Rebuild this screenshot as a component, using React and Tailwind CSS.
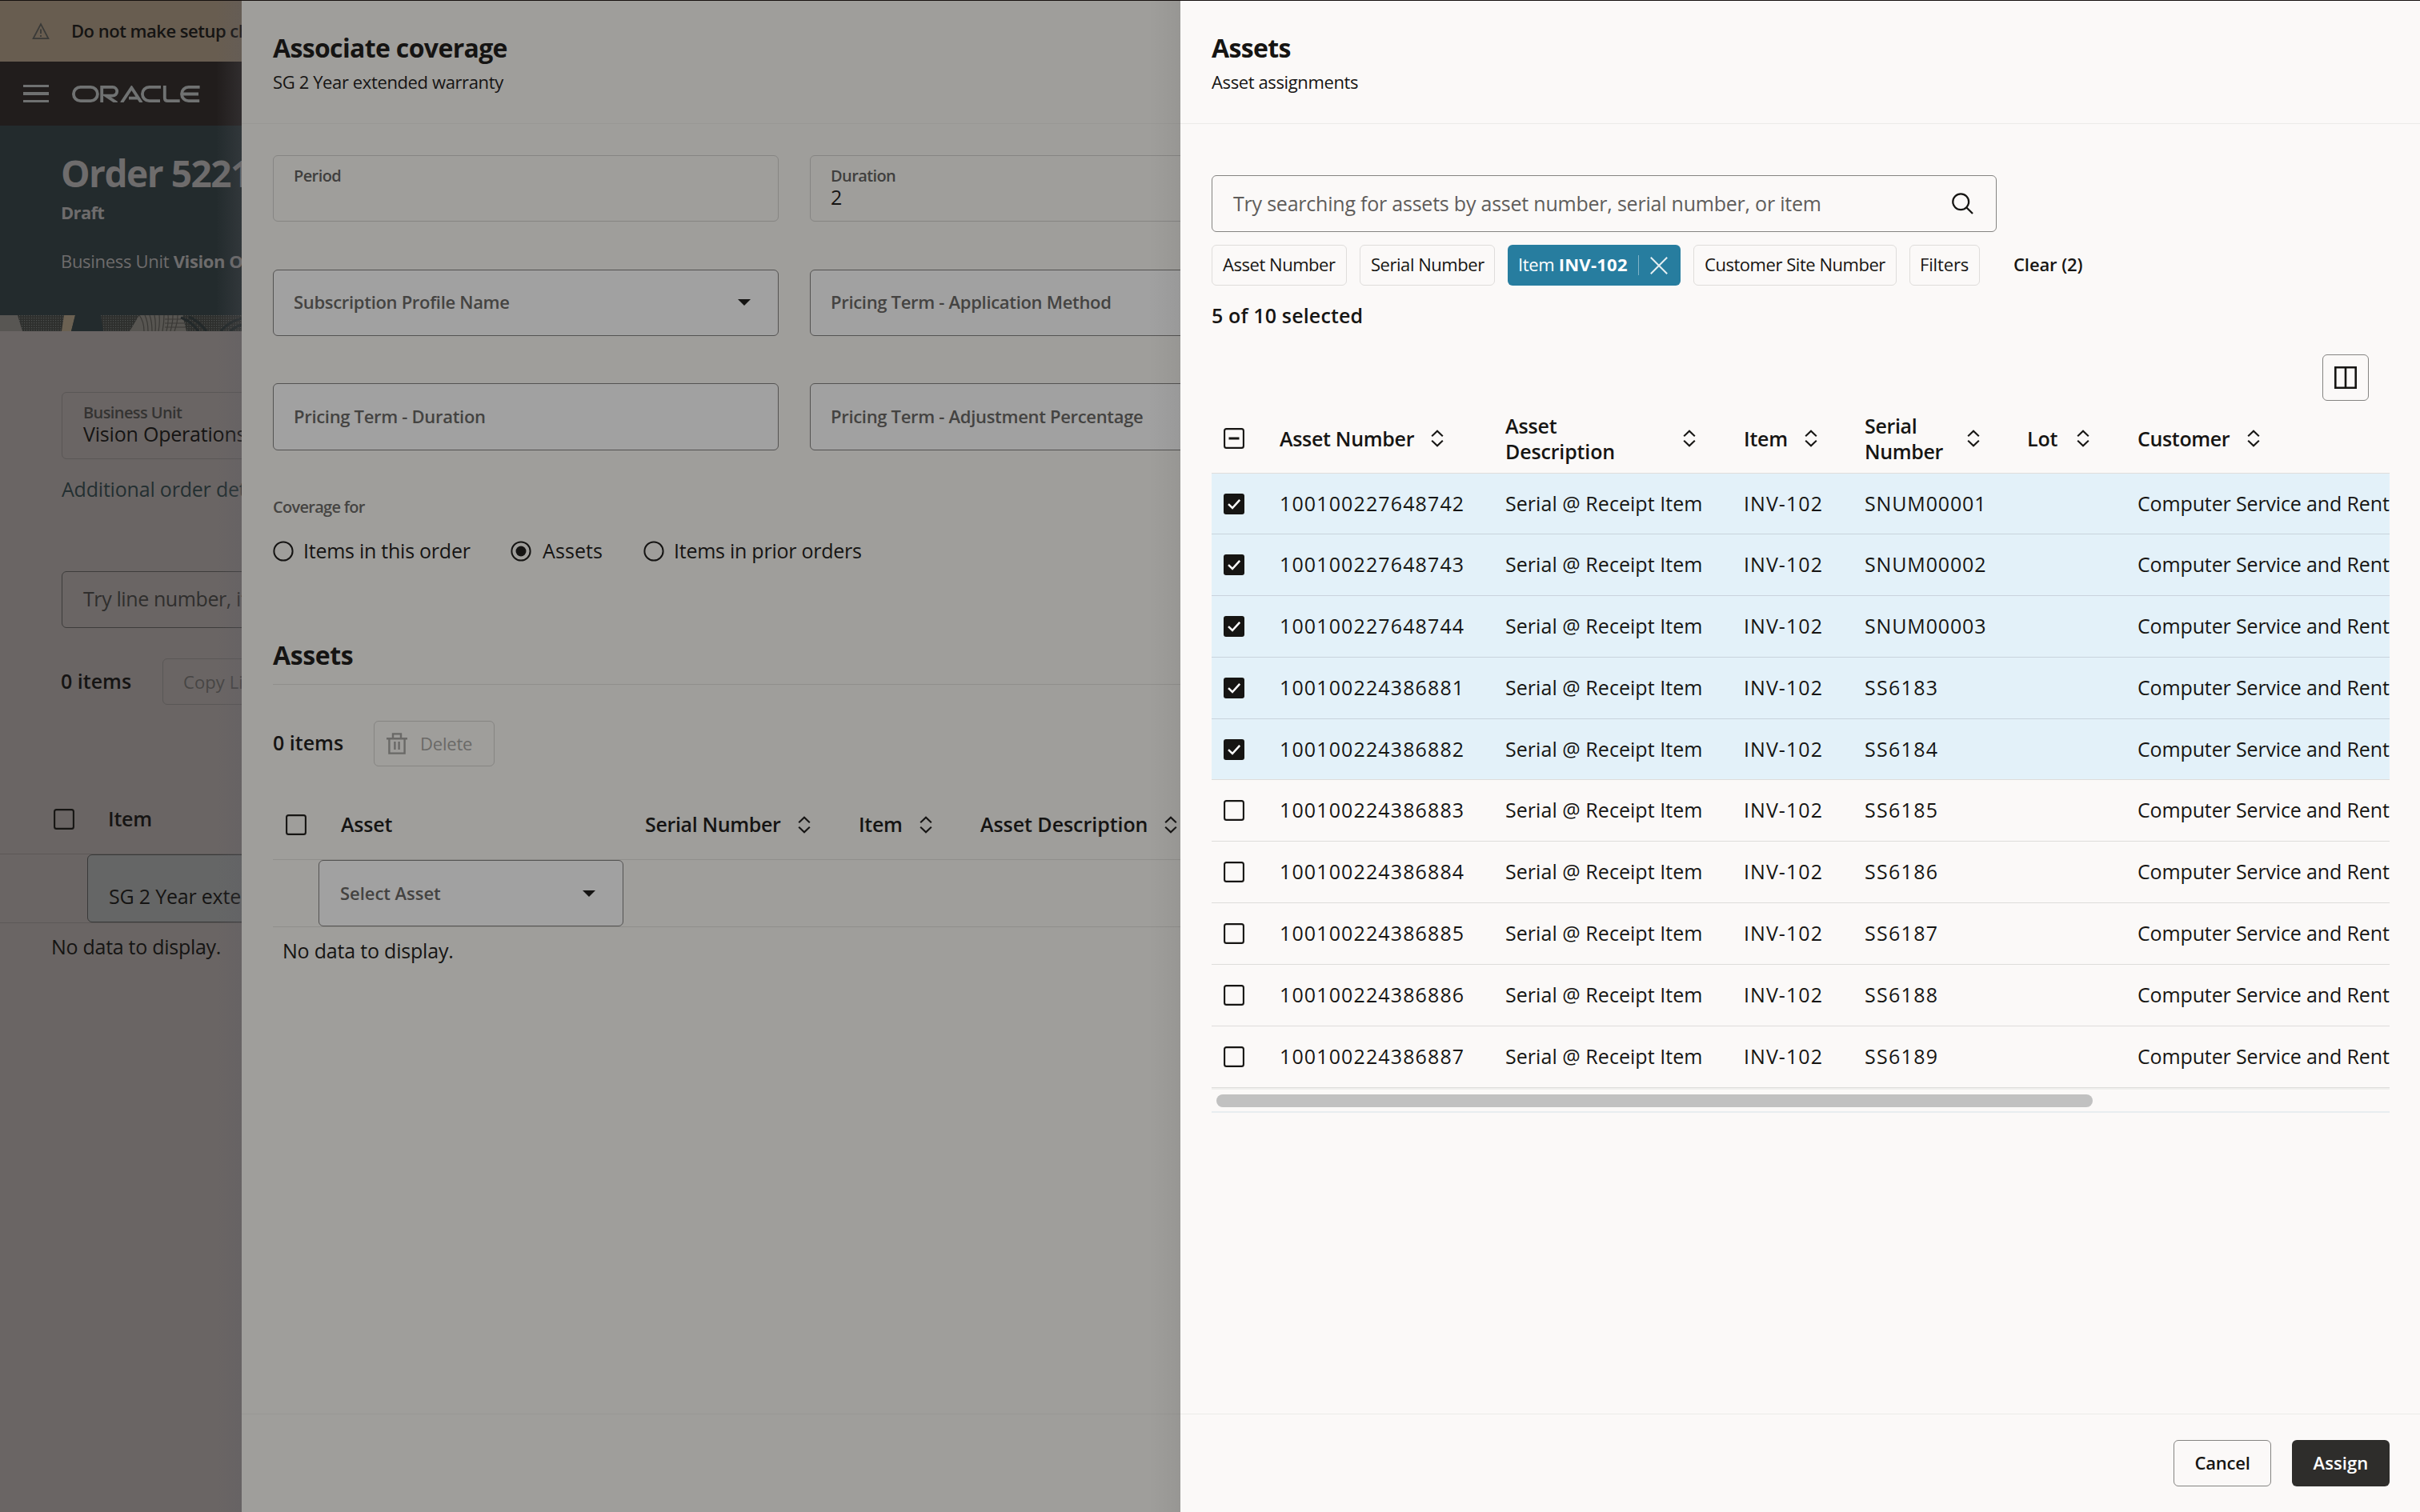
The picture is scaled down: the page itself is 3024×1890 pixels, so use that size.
import React from 'react';

const ASSETS = [
  { number: '100100227648742', serial: 'SNUM00001', checked: true, h: 'h-[76px]' },
  { number: '100100227648743', serial: 'SNUM00002', checked: true, h: 'h-[77px]' },
  { number: '100100227648744', serial: 'SNUM00003', checked: true, h: 'h-[77px]' },
  { number: '100100224386881', serial: 'SS6183', checked: true, h: 'h-[77px]' },
  { number: '100100224386882', serial: 'SS6184', checked: true, last: true, h: 'h-[76px]' },
  { number: '100100224386883', serial: 'SS6185', h: 'h-[77px]' },
  { number: '100100224386884', serial: 'SS6186', h: 'h-[77px]' },
  { number: '100100224386885', serial: 'SS6187', h: 'h-[77px]' },
  { number: '100100224386886', serial: 'SS6188', h: 'h-[77px]' },
  { number: '100100224386887', serial: 'SS6189', h: 'h-[77px]' },
];

const COLS = 'grid grid-cols-[85px_282px_298px_151px_203px_138px_600px]';

function SortIcon({ className = '' }) {
  return (
    <svg viewBox="0 0 16 22" className={`h-[22px] w-4 shrink-0 ${className}`} fill="none" stroke="currentColor" strokeWidth="2.1">
      <path d="M1.2 8.2 8 1.8l6.8 6.4M1.2 13.8 8 20.2l6.8-6.4" />
    </svg>
  );
}

function Checkbox({ state = 'off' }) {
  if (state === 'on') {
    return (
      <svg viewBox="0 0 26 26" className="size-[26px] shrink-0">
        <rect x="0" y="0" width="26" height="26" rx="3" fill="#161513" />
        <path d="m6 13.2 5 4.8 9.2-10.2" fill="none" stroke="#fff" strokeWidth="2.5" />
      </svg>
    );
  }
  return (
    <svg viewBox="0 0 26 26" className="size-[26px] shrink-0" fill="none" stroke="#161513">
      <rect x="1.1" y="1.1" width="23.8" height="23.8" rx="2.5" strokeWidth="2.1" />
      {state === 'mixed' && <path d="M6.5 13h13" strokeWidth="3" />}
    </svg>
  );
}

function Radio({ checked }) {
  return (
    <svg viewBox="0 0 26 26" className="size-[26px] shrink-0" fill="none" stroke="#151413">
      <circle cx="13" cy="13" r="11.6" strokeWidth="2" />
      {checked && <circle cx="13" cy="13" r="6.5" fill="#151413" stroke="none" />}
    </svg>
  );
}

function Caret({ className = '' }) {
  return (
    <svg viewBox="0 0 16 8" className={`h-2 w-4 shrink-0 ${className}`} fill="#151413">
      <path d="M0 0h16L8 8z" />
    </svg>
  );
}

function OracleLogo() {
  return (
    <svg viewBox="90 107 160 21" className="h-[21px] w-40" fill="none" stroke="#707272" strokeWidth="3.8">
      <rect x="91.9" y="108.9" width="30" height="17.2" rx="8.6" />
      <path d="M127.2 128v-19.1h13.6a5.4 5.4 0 0 1 0 10.8h-8.3l13.6 9" />
      <path d="m151.8 128.6 12.6-19 12.4 19M161 122.6h12" />
      <path d="M201 108.9h-14.5a8.6 8.6 0 0 0 0 17.2H200" />
      <path d="M205.8 107v15.4q0 3.7 3.7 3.7h15.2" />
      <path d="M249.6 108.9h-14a8.6 8.6 0 0 0 0 17.2h13.6M228 117.5h20" />
    </svg>
  );
}

function HeroStrip() {
  return (
    <svg viewBox="0 0 302 20" className="h-5 w-[302px] shrink-0" preserveAspectRatio="none">
      <defs>
        <pattern id="weave" width="3" height="3" patternUnits="userSpaceOnUse">
          <rect width="3" height="3" fill="#2e2f2d" />
          <rect width="1.2" height="1.2" fill="#4c4f4e" />
        </pattern>
      </defs>
      <rect width="302" height="20" fill="url(#weave)" />
      <path d="M0 0h22l6 20H0z" fill="#585653" />
      <path d="M80 0h14l-5 20H77z" fill="#6b6152" />
      <path d="M94 0h32l3 20H89z" fill="#232b2d" />
      <path d="M174 0h54l5 20h-71z" fill="#575551" />
      <g fill="none" stroke="#3a3936" strokeWidth="1.2">
        <path d="M174 0q6 8 6 20M181 0q4 8 4 20M187 0q3 8 3 20M193 0q2 9 1 20M199 0q1 9-1 20M205 0q0 9-2 20M210 0q1 9-2 20M216 0q0 9-3 20M222 0q0 9-4 20M206 5h20M206 10h24M206 15h26" />
      </g>
      <g fill="none" stroke="#23292a" strokeWidth="3">
        <path d="M226 3q14 5 22 17M236 2q12 5 22 18M276 20q10-12 26-16M288 20q6-6 14-8" />
      </g>
    </svg>
  );
}

function OrderPage() {
  return (
    <main className="relative flex w-[302px] shrink-0 flex-col overflow-hidden whitespace-nowrap bg-[#6a6564] text-[25px] tracking-[-0.2px] text-[#151413]">
      <div className="flex h-[76px] shrink-0 items-center bg-[#685d50] pb-[1px] pl-10">
        <svg viewBox="0 0 22 22" className="mr-[27px] size-[22px] shrink-0" fill="none" stroke="#3a3a38" strokeWidth="1.8">
          <path d="M11 2.2 1.6 20.2h18.8z" />
          <path d="M11 8.5v5.5M11 16v2" />
        </svg>
        <span className="text-[22px] font-semibold tracking-[-0.5px]">Do not make setup changes</span>
      </div>
      <div className="flex h-20 shrink-0 items-center bg-[#211d1c] pl-[29px]">
        <div className="mr-[29px] flex w-8 flex-col gap-[6px]">
          <i className="h-[3.5px] bg-[#6f7171]" />
          <i className="h-[3.5px] bg-[#6f7171]" />
          <i className="h-[3.5px] bg-[#6f7171]" />
        </div>
        <OracleLogo />
      </div>
      <div className="flex h-[237px] shrink-0 flex-col bg-[#232b2d] pl-[76px] pt-[29px] text-[#6e6c6c]">
        <h1 className="text-[46px] font-bold leading-[60px] tracking-[-1.5px]">Order 5221</h1>
        <p className="mt-[4px] text-[22px] font-bold leading-[30px] tracking-[-0.7px]">Draft</p>
        <p className="mt-[31px] text-[22px] leading-[30px] tracking-[-0.3px]">
          Business Unit <b className="font-bold tracking-[-0.4px]">Vision Operations</b>
        </p>
      </div>
      <HeroStrip />
      <div className="ml-[77px] mt-[76px] flex h-[84px] w-[600px] shrink-0 flex-col rounded-md border border-[#5a5756] pl-[26px] pt-[13px]">
        <span className="text-[20px] font-semibold leading-6 tracking-[-0.6px] text-[#343332]">Business Unit</span>
        <span className="leading-[29px]">Vision Operations</span>
      </div>
      <div className="ml-[77px] mt-[17px] leading-[40px] text-[#232f31]">Additional order details</div>
      <div className="ml-[77px] mt-[83px] flex h-[71px] w-[600px] shrink-0 items-center rounded-md border border-[#3d3c3b] pb-[2px] pl-[26px] tracking-[-0.4px] text-[#2f2e2d]">
        Try line number, item
      </div>
      <div className="mt-[38px] flex h-[58px] shrink-0 items-center pl-[76px]">
        <span className="w-[127px] shrink-0 font-semibold tracking-[0px]">0 items</span>
        <span className="flex h-[58px] w-[200px] shrink-0 items-center rounded-md border border-[#5a5756] pl-[25px] text-[22px] font-medium tracking-[0.1px] text-[#474544]">
          Copy Line
        </span>
      </div>
      <div className="mt-[100px] flex h-[87px] shrink-0 items-center border-b border-[#5c5857] pl-[67px]">
        <Checkbox />
        <span className="ml-[42px] font-semibold">Item</span>
      </div>
      <div className="h-[86px] w-[700px] shrink-0 border-b border-[#5c5857] pl-[109px]">
        <div className="flex h-[85px] items-center rounded-md border border-[#393939] bg-[#656666] pl-[26px] pt-5">SG 2 Year extended</div>
      </div>
      <div className="mt-[9px] pl-[64px] leading-[40px] tracking-[-0.28px]">No data to display.</div>
      <div className="absolute inset-y-0 right-0 w-8 bg-linear-to-r from-transparent to-[#5d5c64]/25" />
    </main>
  );
}

function Field({ label, value, readOnly, caret, tall }) {
  if (readOnly) {
    return (
      <div className="flex h-[83px] w-[632px] shrink-0 flex-col rounded-md border border-[#868583] pl-[25px] pt-[13px]">
        <span className="text-[20px] font-semibold leading-6 tracking-[-0.6px] text-[#403f3e]">{label}</span>
        <span className="leading-7">{value}</span>
      </div>
    );
  }
  return (
    <div
      className={`flex w-[632px] shrink-0 items-center justify-between rounded-md border border-[#545352] bg-[#a1a1a1] pb-[2px] pl-[25px] pr-[34px] ${tall ? 'h-[84px]' : 'h-[83px]'}`}
    >
      <span className="text-[22px] font-semibold tracking-[-0.31px] text-[#444341]">{label}</span>
      {caret && <Caret />}
    </div>
  );
}

function PanelHeader({ title, subtitle, border }) {
  return (
    <header className={`h-[154px] shrink-0 border-b pl-[39px] pt-[39px] ${border}`}>
      <h2 className="text-[32px] font-bold leading-[40px] tracking-[-0.65px]">{title}</h2>
      <p className="mt-[7px] text-[22px] leading-[30px] tracking-[-0.38px]">{subtitle}</p>
    </header>
  );
}

function CoveragePanel() {
  return (
    <section className="relative flex w-[1173px] shrink-0 flex-col overflow-hidden whitespace-nowrap bg-[#9f9e9b] text-[25px] tracking-[-0.2px] text-[#151413]">
      <PanelHeader title="Associate coverage" subtitle="SG 2 Year extended warranty" border="border-[#999895]" />
      <div className="flex flex-col pl-[39px]">
        <div className="mt-[39px] flex gap-[39px]">
          <Field readOnly label="Period" />
          <Field readOnly label="Duration" value="2" />
        </div>
        <div className="mt-[60px] flex gap-[39px]">
          <Field label="Subscription Profile Name" caret />
          <Field label="Pricing Term - Application Method" />
        </div>
        <div className="mt-[59px] flex gap-[39px]">
          <Field tall label="Pricing Term - Duration" />
          <Field tall label="Pricing Term - Adjustment Percentage" />
        </div>
        <p className="mt-[56px] text-[20px] font-semibold leading-[30px] tracking-[-0.7px] text-[#454442]">Coverage for</p>
        <div className="mt-[20px] flex h-10 items-center">
          <Radio />
          <span className="ml-[12px] w-[259px] tracking-[-0.25px]">Items in this order</span>
          <Radio checked />
          <span className="ml-[14px] w-[126px] tracking-[0.1px]">Assets</span>
          <Radio />
          <span className="ml-[12px] tracking-[-0.25px]">Items in prior orders</span>
        </div>
        <h3 className="mt-[90px] w-[1200px] border-b border-[#908f8c] pb-4 text-[32px] font-bold leading-[40px] tracking-[-0.4px]">Assets</h3>
        <div className="mt-[45px] flex h-[57px] items-center pb-[1px]">
          <span className="w-[126px] font-semibold tracking-[0px]">0 items</span>
          <span className="flex h-[57px] w-[151px] items-center rounded-md border border-[#868583] pl-[15px] text-[22px] font-medium text-[#6a6967]">
            <svg viewBox="0 0 26 27" className="mr-[16px] h-[27px] w-[26px]" fill="none" stroke="#6a6967" strokeWidth="2.4">
              <path d="M0 7.2h26M8 7V1.4h10V7M3.4 7v18.6h19.2V7M10.4 11v10M15.6 11v10" />
            </svg>
            Delete
          </span>
        </div>
        <div className="mt-[29px] flex h-[88px] w-[1200px] items-center border-b border-[#908f8c] pl-4 pt-[1px] font-semibold">
          <Checkbox />
          <span className="ml-[43px] w-[380px]">Asset</span>
          <span className="w-[191px] tracking-[-0.35px]">Serial Number</span>
          <SortIcon />
          <span className="ml-[60px] w-[76px] tracking-[-0.3px]">Item</span>
          <SortIcon />
          <span className="ml-[60px] w-[230px] tracking-[-0.05px]">Asset Description</span>
          <SortIcon />
        </div>
        <div className="h-[84px] w-[1200px] border-b border-[#908f8c] pl-[57px]">
          <div className="flex h-[83px] w-[381px] items-center justify-between rounded-md border border-[#545352] bg-[#a1a1a1] pl-[26px] pr-[34px] text-[22px] font-semibold tracking-[-0.05px] text-[#444341]">
            Select Asset
            <Caret />
          </div>
        </div>
        <p className="mt-[9px] pl-[12px] leading-[40px]">No data to display.</p>
      </div>
      <div className="mt-auto h-[123px] border-t border-[#999895]" />
      <div className="absolute inset-y-0 right-0 w-10 bg-linear-to-r from-transparent to-black/5" />
    </section>
  );
}

function Chip({ children }) {
  return <span className="flex h-[51px] items-center rounded-md border border-[#dfdddb] pb-[3px] text-[22px] font-medium tracking-[-0.46px]">{children}</span>;
}

function AssetsPanel() {
  return (
    <section className="flex w-[1549px] shrink-0 flex-col overflow-hidden whitespace-nowrap bg-[#fbf9f8] text-[25px] tracking-[-0.2px] text-[#161513]">
      <PanelHeader title="Assets" subtitle="Asset assignments" border="border-[#ecebe9]" />
      <div className="flex flex-col px-[39px]">
        <div className="mt-16 flex h-[71px] w-[981px] items-center justify-between rounded-md border border-[#858482] pl-[26px] pr-[28px] tracking-[-0.22px] text-[#5f5d5b]">
          Try searching for assets by asset number, serial number, or item
          <svg viewBox="0 0 27 27" className="size-[27px]" fill="none" stroke="#161513" strokeWidth="2.3">
            <circle cx="11.2" cy="11.2" r="9.9" />
            <path d="m18.2 18.2 7.8 7.8" />
          </svg>
        </div>
        <div className="mt-4 flex gap-4">
          <Chip><span className="w-[167px] pl-[13px]">Asset Number</span></Chip>
          <Chip><span className="w-[167px] pl-[13px]">Serial Number</span></Chip>
          <span className="flex h-[51px] w-[216px] items-center rounded-md bg-[#277d9f] pl-[13px] text-[22px] text-white">
            <span className="w-[150px] pb-[2px] tracking-[-0.35px]">Item <b className="font-bold tracking-[0.25px]">INV-102</b></span>
            <i className="h-[25px] w-px bg-[#7fb3c8]" />
            <svg viewBox="0 0 22 22" className="ml-[14px] size-[22px]" stroke="#e4eef2" strokeWidth="2">
              <path d="m.8.8 20.4 20.4M21.2.8.8 21.2" />
            </svg>
          </span>
          <Chip><span className="w-[252px] pl-[13px]">Customer Site Number</span></Chip>
          <Chip><span className="w-[86px] pl-[12px] tracking-[-0.15px]">Filters</span></Chip>
          <span className="ml-[26px] flex items-center pb-[2px] text-[22px] font-semibold tracking-[-0.1px]">Clear (2)</span>
        </div>
        <p className="mt-[17px] font-semibold leading-[40px] tracking-[0.15px]">5 of 10 selected</p>
        <button className="mr-[25px] mt-[29px] flex size-[58px] items-center justify-center self-end rounded-md border border-[#858482]">
          <svg viewBox="0 0 28 28" className="size-7" fill="none" stroke="#161513" strokeWidth="2.6">
            <path d="M1.3 1.3h25.4v25.4H1.3zM14 1v26" />
          </svg>
        </button>
        <div className="w-[1472px] overflow-hidden">
          <div className={`${COLS} h-[91px] items-center border-b border-[#e0dedc] pt-[4px] font-semibold leading-[32px]`}>
            <span className="pl-[15px]"><Checkbox state="mixed" /></span>
            <span className="flex items-center"><span className="w-[189px] tracking-[-0.3px]">Asset Number</span><SortIcon /></span>
            <span className="flex items-center"><span className="w-[222px] tracking-[-0.15px]">Asset<br />Description</span><SortIcon /></span>
            <span className="flex items-center"><span className="w-[76px]">Item</span><SortIcon /></span>
            <span className="flex items-center"><span className="w-[128px] tracking-[-0.35px]">Serial<br />Number</span><SortIcon /></span>
            <span className="flex items-center"><span className="w-[62px]">Lot</span><SortIcon /></span>
            <span className="flex items-center"><span className="w-[137px] tracking-[-0.35px]">Customer</span><SortIcon /></span>
          </div>
          {ASSETS.map((a) => (
            <div
              key={a.number}
              className={`${COLS} ${a.h} items-center border-b ${a.checked ? 'bg-[#e3f1f9]' : ''} ${a.checked && !a.last ? 'border-[#c9d3dd]' : 'border-[#dedddb]'}`}
            >
              <span className="pl-[15px]"><Checkbox state={a.checked ? 'on' : 'off'} /></span>
              <span className="tracking-[1.12px]">{a.number}</span>
              <span className="tracking-[0.05px]">Serial @ Receipt Item</span>
              <span className="tracking-[1.05px]">INV-102</span>
              <span className={a.serial.length > 6 ? 'tracking-[0.85px]' : 'tracking-[1.3px]'}>{a.serial}</span>
              <span />
              <span className="tracking-[-0.14px]">Computer Service and Rentals</span>
            </div>
          ))}
          <div className="h-[31px] border-b-2 border-t-2 border-b-[#e8edf0] border-t-[#efefed] pl-[6px] pt-[6px]">
            <div className="h-4 w-[1095px] rounded-full bg-[#c1c1c1]" />
          </div>
        </div>
      </div>
      <footer className="mt-auto flex h-[123px] shrink-0 justify-end gap-[26px] border-t border-[#ecebe9] pr-[38px] pt-8 text-[22px] font-semibold">
        <button className="h-[58px] w-[122px] rounded-md border border-[#858482] pb-[2px]">Cancel</button>
        <button className="h-[58px] w-[122px] rounded-md bg-[#2e2d2b] pb-[1px] tracking-[0.1px] text-white">Assign</button>
      </footer>
    </section>
  );
}

export default function App() {
  return (
    <div className="flex h-[1890px] w-[3024px] flex-col overflow-hidden font-['Open_Sans','Noto_Sans',sans-serif]">
      <div className="h-px shrink-0 bg-[#16100f]" />
      <div className="flex min-h-0 flex-1">
        <OrderPage />
        <CoveragePanel />
        <AssetsPanel />
      </div>
    </div>
  );
}
